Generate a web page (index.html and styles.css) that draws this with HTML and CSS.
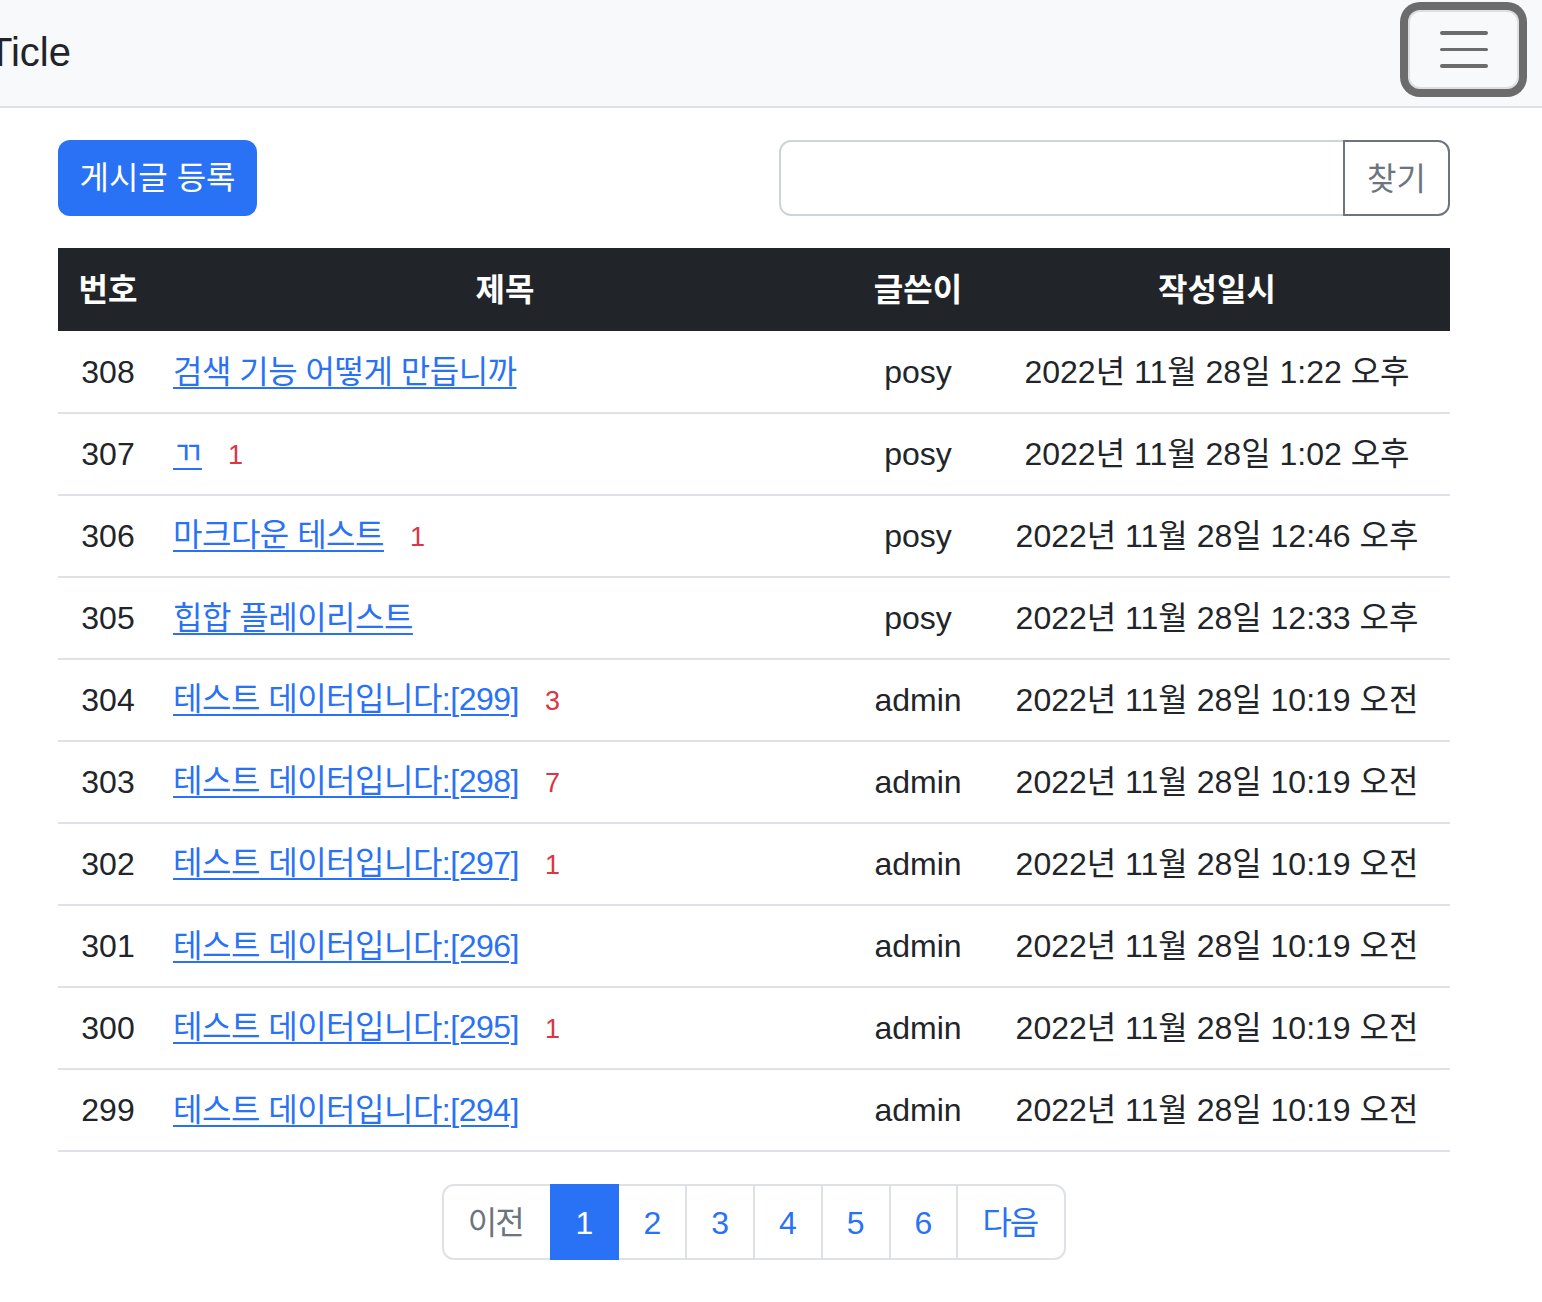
FILE: index.html
```html
<!DOCTYPE html>
<html lang="ko">
<head>
<meta charset="utf-8">
<title>Ticle</title>
<link rel="stylesheet" href="styles.css">
</head>
<body>
<nav class="navbar">
  <a class="brand" href="#">Ticle</a>
  <button class="toggler" type="button" aria-label="menu">
    <span class="toggler-line"></span>
    <span class="toggler-line"></span>
    <span class="toggler-line"></span>
  </button>
</nav>
<main class="container">
  <div class="toolbar">
    <a class="btn-primary" href="#">게시글 등록</a>
    <form class="search">
      <input class="search-input" type="text">
      <button class="btn-outline" type="button">찾기</button>
    </form>
  </div>
  <table class="board">
    <colgroup>
      <col class="col-no"><col class="col-title"><col class="col-author"><col class="col-date">
    </colgroup>
    <thead>
      <tr><th>번호</th><th>제목</th><th>글쓴이</th><th>작성일시</th></tr>
    </thead>
    <tbody>
      <tr><td class="num">308</td><td class="title"><a href="#">검색 기능 어떻게 만듭니까</a></td><td class="center">posy</td><td class="center">2022년 11월 28일 1:22 오후</td></tr>
      <tr><td class="num">307</td><td class="title"><a href="#">ㄲ</a><span class="count">1</span></td><td class="center">posy</td><td class="center">2022년 11월 28일 1:02 오후</td></tr>
      <tr><td class="num">306</td><td class="title"><a href="#">마크다운 테스트</a><span class="count">1</span></td><td class="center">posy</td><td class="center">2022년 11월 28일 12:46 오후</td></tr>
      <tr><td class="num">305</td><td class="title"><a href="#">힙합 플레이리스트</a></td><td class="center">posy</td><td class="center">2022년 11월 28일 12:33 오후</td></tr>
      <tr><td class="num">304</td><td class="title"><a href="#">테스트 데이터입니다:[299]</a><span class="count">3</span></td><td class="center">admin</td><td class="center">2022년 11월 28일 10:19 오전</td></tr>
      <tr><td class="num">303</td><td class="title"><a href="#">테스트 데이터입니다:[298]</a><span class="count">7</span></td><td class="center">admin</td><td class="center">2022년 11월 28일 10:19 오전</td></tr>
      <tr><td class="num">302</td><td class="title"><a href="#">테스트 데이터입니다:[297]</a><span class="count">1</span></td><td class="center">admin</td><td class="center">2022년 11월 28일 10:19 오전</td></tr>
      <tr><td class="num">301</td><td class="title"><a href="#">테스트 데이터입니다:[296]</a></td><td class="center">admin</td><td class="center">2022년 11월 28일 10:19 오전</td></tr>
      <tr><td class="num">300</td><td class="title"><a href="#">테스트 데이터입니다:[295]</a><span class="count">1</span></td><td class="center">admin</td><td class="center">2022년 11월 28일 10:19 오전</td></tr>
      <tr><td class="num">299</td><td class="title"><a href="#">테스트 데이터입니다:[294]</a></td><td class="center">admin</td><td class="center">2022년 11월 28일 10:19 오전</td></tr>
    </tbody>
  </table>
  <nav class="pager">
    <ul class="pagination">
      <li class="page-item disabled"><span class="page-link word">이전</span></li>
      <li class="page-item active"><a class="page-link" href="#">1</a></li>
      <li class="page-item"><a class="page-link" href="#">2</a></li>
      <li class="page-item"><a class="page-link" href="#">3</a></li>
      <li class="page-item"><a class="page-link" href="#">4</a></li>
      <li class="page-item"><a class="page-link" href="#">5</a></li>
      <li class="page-item"><a class="page-link" href="#">6</a></li>
      <li class="page-item"><a class="page-link word" href="#">다음</a></li>
    </ul>
  </nav>
</main>
</body>
</html>
```
FILE: styles.css
```css
* { box-sizing: border-box; }

html, body {
  margin: 0;
  padding: 0;
  background: #fff;
}

body {
  font-family: "Liberation Sans", "Noto Sans CJK KR", sans-serif;
  font-size: 32px;
  line-height: 48px;
  color: #212529;
  font-feature-settings: "palt";
  overflow: hidden;
}

/* navbar */
.navbar {
  height: 108px;
  background: #f8f9fa;
  border-bottom: 2px solid #dee2e6;
  display: flex;
  justify-content: space-between;
  align-items: flex-start;
  padding: 10px 23px 0 0;
}

.brand {
  margin-left: -12px;
  padding-top: 3px;
  font-size: 40px;
  line-height: 79px;
  color: #212529;
  text-decoration: none;
}

.toggler {
  width: 111px;
  height: 79px;
  padding: 0;
  background: transparent;
  border: 2px solid rgba(0, 0, 0, 0.1);
  border-radius: 12px;
  box-shadow: 0 0 0 8px #6c6c6c;
  display: flex;
  flex-direction: column;
  align-items: center;
  justify-content: center;
  gap: 13px;
}

.toggler-line {
  display: block;
  width: 48px;
  height: 3.5px;
  border-radius: 2px;
  background: #6c6c6c;
}

/* container */
.container {
  margin-left: 58px;
  width: 1392px;
}

.toolbar {
  display: flex;
  justify-content: space-between;
  align-items: center;
  margin: 32px 0 32px;
  height: 76px;
}

.btn-primary {
  display: inline-block;
  width: 199px;
  height: 76px;
  line-height: 48px;
  padding: 14px 0 10px;
  text-align: center;
  background: #2a72f5;
  color: #fff;
  border-radius: 12px;
  text-decoration: none;
}

.search {
  display: flex;
  width: 671px;
  height: 76px;
  margin: 0;
}

.search-input {
  flex: 1;
  height: 76px;
  border: 2px solid #ced4da;
  border-radius: 12px 0 0 12px;
  font: inherit;
  padding: 12px 24px;
  margin-right: -2px;
}

.btn-outline {
  width: 107px;
  height: 76px;
  background: #fff;
  border: 2px solid #6c757d;
  border-radius: 0 12px 12px 0;
  color: #6c757d;
  font: inherit;
  padding: 2px 0 0;
  position: relative;
}

/* table */
.board {
  width: 1392px;
  border-collapse: collapse;
  table-layout: fixed;
  margin-bottom: 32px;
}

.col-no { width: 100px; }
.col-title { width: 694px; }
.col-author { width: 132px; }
.col-date { width: 466px; }

.board th {
  background: #212529;
  color: #fff;
  font-weight: bold;
  text-align: center;
  height: 83px;
  padding: 1px 0 0;
  line-height: 48px;
  vertical-align: middle;
}

.board tbody tr {
  height: 82px;
}

.board td {
  height: 82px;
  padding: 0;
  line-height: 36px;
  vertical-align: middle;
  border-bottom: 2px solid #dee2e6;
  white-space: nowrap;
}

.board td.num,
.board td.center {
  text-align: center;
}

.board td.title {
  padding-left: 15px;
}

.board td.title a {
  color: #2a72f5;
  letter-spacing: -0.5px;
  text-decoration: underline;
  text-decoration-thickness: 2px;
  text-underline-offset: 4px;
}

.count {
  color: #dc3545;
  font-size: 27px;
  margin-left: 26px;
}

/* pagination */
.pager {
  display: flex;
  justify-content: center;
}

.pagination {
  display: flex;
  list-style: none;
  margin: 0;
  padding: 0;
}

.page-link {
  display: block;
  height: 76px;
  padding: 13px 24px 11px;
  line-height: 48px;
  border: 2px solid #dee2e6;
  margin-left: -2px;
  color: #2a72f5;
  text-decoration: none;
  background: #fff;
}

.page-link.word {
  letter-spacing: -2px;
  padding-right: 27px;
}

.page-item:first-child .page-link {
  margin-left: 0;
  border-radius: 12px 0 0 12px;
}

.page-item:last-child .page-link {
  border-radius: 0 12px 12px 0;
}

.page-item.disabled .page-link {
  color: #6c757d;
}

.page-item.active .page-link {
  background: #2a72f5;
  border-color: #2a72f5;
  color: #fff;
  position: relative;
}
```
